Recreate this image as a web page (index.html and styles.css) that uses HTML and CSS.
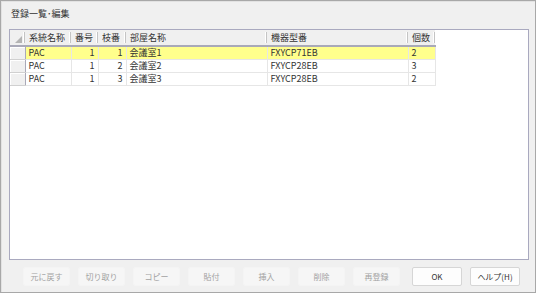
FILE: index.html
```html
<!DOCTYPE html>
<html lang="ja">
<head>
    <meta charset="UTF-8">
    <meta name="viewport" content="width=device-width, initial-scale=1.0">
    <title>登録一覧･編集</title>
    <link rel="stylesheet" href="styles.css">
</head>
<body>
    <div id="window">
        <div id="title">登録一覧･編集</div>
        <div id="grid">
            <table>
                <thead>
                    <tr>
                        <th class="corner"><span class="tri"></span></th>
                        <th class="c1">系統名称</th>
                        <th class="c2">番号</th>
                        <th class="c3">枝番</th>
                        <th class="c4">部屋名称</th>
                        <th class="c5">機器型番</th>
                        <th class="c6">個数</th>
                    </tr>
                </thead>
                <tbody>
                    <tr class="selected">
                        <td class="rowhead"></td>
                        <td>PAC</td>
                        <td class="num">1</td>
                        <td class="num">1</td>
                        <td>会議室1</td>
                        <td>FXYCP71EB</td>
                        <td>2</td>
                    </tr>
                    <tr>
                        <td class="rowhead"></td>
                        <td>PAC</td>
                        <td class="num">1</td>
                        <td class="num">2</td>
                        <td>会議室2</td>
                        <td>FXYCP28EB</td>
                        <td>3</td>
                    </tr>
                    <tr>
                        <td class="rowhead"></td>
                        <td>PAC</td>
                        <td class="num">1</td>
                        <td class="num">3</td>
                        <td>会議室3</td>
                        <td>FXYCP28EB</td>
                        <td>2</td>
                    </tr>
                </tbody>
            </table>
        </div>
        <div id="buttons">
            <button class="btn" disabled>元に戻す</button>
            <button class="btn" disabled>切り取り</button>
            <button class="btn" disabled>コピー</button>
            <button class="btn" disabled>貼付</button>
            <button class="btn" disabled>挿入</button>
            <button class="btn" disabled>削除</button>
            <button class="btn" disabled>再登録</button>
            <button class="btn main ok">OK</button>
            <button class="btn main">ヘルプ(H)</button>
        </div>
    </div>
</body>
</html>
```

FILE: styles.css
```css
body {
    margin: 0;
    background: #ffffff;
    font-family: "Noto Sans CJK JP", "Noto Sans", sans-serif;
    color: #333333;
}

#window {
    box-sizing: border-box;
    width: 536px;
    height: 293px;
    border: 1px solid #a8a8a8;
    box-shadow: inset 1px 1px 0 #e2e2e2;
    background: #f0f0f0;
    display: flex;
    flex-direction: column;
}

#title {
    height: 27px;
    padding: 6px 0 0 10px;
    box-sizing: border-box;
    font-size: 9px;
    line-height: 13px;
}

#grid {
    box-sizing: border-box;
    height: 231px;
    margin: 1px 6px 0 8px;
    border: 1px solid #a9a9bf;
    background: #ffffff;
    overflow: hidden;
}

table {
    border-collapse: collapse;
    table-layout: fixed;
    font-size: 9px;
}

th {
    position: relative;
    height: 15px;
    padding: 0 0 0 4px;
    background: #f0f0f0;
    border-bottom: 2px solid #a9a9b8;
    font-weight: normal;
    text-align: left;
    line-height: 15px;
    white-space: nowrap;
}

th::after {
    content: '';
    position: absolute;
    right: 0;
    top: 2px;
    bottom: 2px;
    width: 1px;
    background: #c4c4c4;
    box-shadow: -1px 0 0 #ffffff;
}

th.corner {
    width: 15px;
    padding: 0;
}

.tri {
    position: absolute;
    right: 3px;
    bottom: 2px;
    width: 0;
    height: 0;
    border-left: 7px solid transparent;
    border-bottom: 7px solid #b4b4b4;
}

.c1 { width: 42px; }
.c2 { width: 23px; }
.c3 { width: 24px; }
.c4 { width: 137px; }
.c5 { width: 137px; }
.c6 { width: 23px; }

td {
    height: 12px;
    padding: 0 3px;
    border-right: 1px solid #e6e6e6;
    border-bottom: 1px solid #e6e6e6;
    line-height: 12px;
    white-space: nowrap;
}

td.num {
    text-align: right;
}

td.rowhead {
    padding: 0;
    background: #f0f0f0;
    border-right: 1px solid #a9a9b8;
    border-bottom: 1px solid #d0d0d0;
    box-shadow: inset 1px 1px 0 #ffffff;
}

tr.selected td {
    background: #ffff8c;
}

tr.selected td.rowhead {
    background: #f0f0f0;
}

#buttons {
    display: flex;
    gap: 8px;
    padding: 7px 0 0 22px;
}

.btn {
    box-sizing: border-box;
    width: 47px;
    height: 19px;
    padding: 0;
    border: 1px solid #f4f4f4;
    border-radius: 2px;
    background: #f6f6f6;
    font-family: "Noto Sans CJK JP", "Noto Sans", sans-serif;
    font-size: 8px;
    color: #a2a2a2;
}

.btn.main {
    width: 50px;
    border-color: #d6d6d6;
    background: #fdfdfd;
    color: #333333;
}

.btn.ok {
    margin-left: 4px;
}
```
